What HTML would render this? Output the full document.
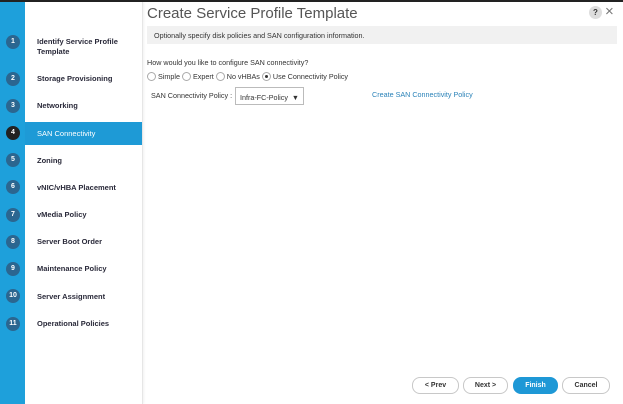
<html><head><style>
body{margin:0;width:623px;height:404px;overflow:hidden;background:#fff;font-family:"Liberation Sans",sans-serif;position:relative}
.top{position:absolute;left:0;top:0;width:623px;height:2px;background:#222}
.strip{position:absolute;left:0;top:2px;width:25px;height:402px;background:#1ea0db}
.nav{position:absolute;left:25px;top:2px;width:117px;height:402px;background:#fff;border-right:1px solid #e6e6e6;box-shadow:1px 0 2px rgba(0,0,0,.06)}
.c{position:absolute;left:6px;width:14px;height:14px;border-radius:50%;background:#2b6690;color:#fff;font-size:7px;font-weight:bold;text-align:center;line-height:14px}
.l{position:absolute;left:37px;font-size:7.5px;font-weight:bold;color:#2a2a3a;line-height:10px}
.act{position:absolute;left:25px;top:122px;width:117px;height:23px;background:#1e9ad6}
.t{position:absolute;font-size:7.2px;color:#333}
.r{display:inline-block;width:7px;height:7px;border:1px solid #aaa;border-radius:50%;vertical-align:-2px;margin-right:2px;position:relative}
.btn{position:absolute;top:377px;height:15px;border:1px solid #c8c8c8;border-radius:8px;font-size:7px;font-weight:bold;text-align:center;line-height:15px;color:#333;background:#fff}
</style></head><body>
<div class="top"></div>
<div class="strip"></div>
<div class="nav"></div>
<div class="act"></div>
<div class="c" style="top:35px">1</div><div class="l" style="top:37px">Identify Service Profile<br>Template</div>
<div class="c" style="top:72px">2</div><div class="l" style="top:74px">Storage Provisioning</div>
<div class="c" style="top:99px">3</div><div class="l" style="top:101px">Networking</div>
<div class="c" style="top:126px;background:#222">4</div><div class="l" style="top:129px;color:#fff;font-weight:normal">SAN Connectivity</div>
<div class="c" style="top:153px">5</div><div class="l" style="top:156px">Zoning</div>
<div class="c" style="top:180px">6</div><div class="l" style="top:183px">vNIC/vHBA Placement</div>
<div class="c" style="top:208px">7</div><div class="l" style="top:210px">vMedia Policy</div>
<div class="c" style="top:235px">8</div><div class="l" style="top:237px">Server Boot Order</div>
<div class="c" style="top:262px">9</div><div class="l" style="top:264px">Maintenance Policy</div>
<div class="c" style="top:289px">10</div><div class="l" style="top:292px">Server Assignment</div>
<div class="c" style="top:317px">11</div><div class="l" style="top:319px">Operational Policies</div>

<div style="position:absolute;left:147px;top:5px;font-size:15px;color:#555">Create Service Profile Template</div>
<div style="position:absolute;left:589px;top:6px;width:13px;height:13px;border-radius:50%;background:#ddd;color:#333;font-size:8px;font-weight:bold;text-align:center;line-height:13px">?</div>
<div style="position:absolute;left:605px;top:3px;font-size:15px;color:#777">×</div>
<div style="position:absolute;left:147px;top:26px;width:470px;height:18px;background:#f1f1f1"></div>
<div class="t" style="left:154px;top:31px">Optionally specify disk policies and SAN configuration information.</div>
<div class="t" style="left:147px;top:58px">How would you like to configure SAN connectivity?</div>
<div class="t" style="left:147px;top:72px"><span class="r"></span>Simple <span class="r"></span>Expert <span class="r"></span>No vHBAs <span class="r"><span style="position:absolute;left:2px;top:2px;width:3px;height:3px;border-radius:50%;background:#333"></span></span>Use Connectivity Policy</div>
<div class="t" style="left:151px;top:91px">SAN Connectivity Policy :</div>
<div style="position:absolute;left:235px;top:87px;width:67px;height:16px;border:1px solid #bbb;background:#fff"></div>
<div class="t" style="left:240px;top:93px">Infra-FC-Policy &nbsp;▼</div>
<div class="t" style="left:372px;top:90px;color:#2a82b8">Create SAN Connectivity Policy</div>
<div class="btn" style="left:412px;width:45px">&lt; Prev</div>
<div class="btn" style="left:463px;width:43px">Next &gt;</div>
<div class="btn" style="left:513px;width:43px;background:#1e98d6;border-color:#1e98d6;color:#fff">Finish</div>
<div class="btn" style="left:562px;width:46px">Cancel</div>
</body></html>
